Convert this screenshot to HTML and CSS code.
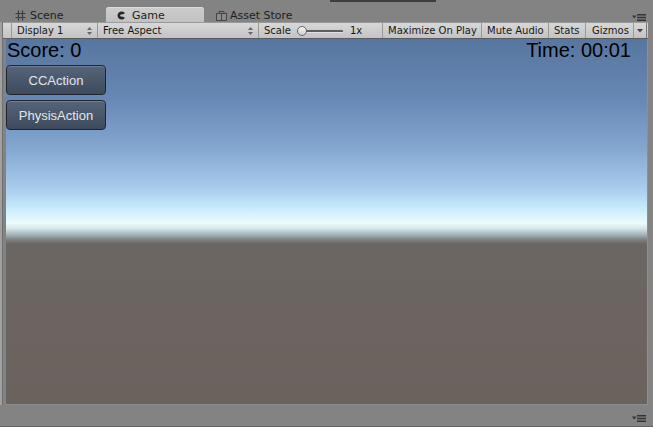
FILE: index.html
```html
<!DOCTYPE html>
<html lang="en">
<head>
  <meta charset="UTF-8">
  <meta name="viewport" content="width=device-width, initial-scale=1.0">
  <link rel="stylesheet" href="styles.css">
  <title>Game</title>
</head>
<body>
  <div class="editor">
    <div class="tabbar">
      <div class="top-mark"></div>
      <div class="tab tab-scene">
        <svg width="11" height="11" viewBox="0 0 11 11"><path d="M3.5 0.5V10.5M7.5 0.5V10.5M0.5 3.5H10.5M0.5 7.5H10.5" stroke="#3c3c3c" stroke-width="1.2" fill="none"/></svg>
        <span>Scene</span>
      </div>
      <div class="tab active">
        <svg width="9" height="9" viewBox="0 0 9 9"><path d="M8 2.2A4.1 4.1 0 1 0 8 6.8L5.2 5.6A1.3 1.3 0 1 1 5.2 3.4Z" fill="#262626"/></svg>
        <span>Game</span>
      </div>
      <div class="tab tab-store">
        <svg width="11" height="11" viewBox="0 0 11 11"><path d="M0.5 3.5H10.5V10.5H0.5Z" fill="#8a8a8a" stroke="#444" stroke-width="1"/><path d="M3 3.5V1.5H8V3.5" stroke="#444" stroke-width="1" fill="none"/><path d="M5.5 3.5V10.5" stroke="#444" stroke-width="1"/></svg>
        <span>Asset Store</span>
      </div>
      <div class="spacer"></div>
      <div class="pane-menu">
        <svg width="14" height="7" viewBox="0 0 14 7"><path d="M0 1.5H4.5L2.25 4.5Z" fill="#333"/><path d="M5 0.75H14M5 3.5H14M5 6.25H14" stroke="#333" stroke-width="1.3"/></svg>
      </div>
    </div>

    <div class="workspace">
      <div class="side-strip"></div>
      <div class="game-panel">
        <div class="toolbar">
          <div class="tool-lead"></div>
          <div class="tool-cell cell-display">
            <span>Display 1</span>
            <svg class="updown" width="5" height="8" viewBox="0 0 5 8"><path d="M0 3H5L2.5 0Z M0 5H5L2.5 8Z" fill="#666"/></svg>
          </div>
          <div class="tool-cell cell-aspect">
            <span>Free Aspect</span>
            <svg class="updown" width="5" height="8" viewBox="0 0 5 8"><path d="M0 3H5L2.5 0Z M0 5H5L2.5 8Z" fill="#666"/></svg>
          </div>
          <div class="tool-cell cell-scale">
            <span>Scale</span>
            <div class="slider">
              <div class="slider-track"></div>
              <div class="slider-knob"></div>
            </div>
            <span class="scale-value">1x</span>
          </div>
          <div class="tool-cell cell-max">Maximize On Play</div>
          <div class="tool-cell cell-mute">Mute Audio</div>
          <div class="tool-cell cell-stats">Stats</div>
          <div class="tool-cell cell-gizmos">Gizmos</div>
          <div class="tool-cell cell-arrow">
            <svg width="6" height="4" viewBox="0 0 6 4"><path d="M0 0H6L3 3.5Z" fill="#444"/></svg>
          </div>
        </div>

        <div class="game-view">
          <div class="hud">
            <span>Score: 0</span>
            <span>Time: 00:01</span>
          </div>
          <button class="gui-button">CCAction</button>
          <button class="gui-button">PhysisAction</button>
        </div>
      </div>
    </div>

    <div class="footer">
      <div class="pane-menu">
        <svg width="14" height="7" viewBox="0 0 14 7"><path d="M0 1.5H4.5L2.25 4.5Z" fill="#333"/><path d="M5 0.75H14M5 3.5H14M5 6.25H14" stroke="#333" stroke-width="1.3"/></svg>
      </div>
    </div>
  </div>
</body>
</html>
```

FILE: styles.css
```css
body {
  margin: 0;
  background: #838383;
  font-family: "DejaVu Sans", sans-serif;
  overflow: hidden;
}

.editor {
  width: 653px;
  height: 427px;
  display: flex;
  flex-direction: column;
}

/* tabs */

.tabbar {
  position: relative;
  height: 22px;
  display: flex;
  align-items: flex-end;
  padding-left: 6px;
  box-sizing: border-box;
}

.top-mark {
  position: absolute;
  left: 330px;
  top: 0;
  width: 106px;
  height: 2px;
  background: #3d3d3d;
}

.tab {
  height: 15px;
  display: flex;
  align-items: center;
  gap: 4px;
  font-size: 11px;
  color: #1e1e1e;
  padding-left: 9px;
  padding-top: 1px;
  box-sizing: border-box;
}

.tab-scene {
  width: 100px;
}

.tab.active {
  width: 98px;
  padding-left: 11px;
  gap: 6px;
  background: linear-gradient(#cdcdcd, #c1c1c1);
  border-radius: 3px 3px 0 0;
  box-shadow: inset 0 1px #dadada;
}

.tab-store {
  width: 100px;
  padding-left: 12px;
  gap: 3px;
}

.spacer {
  flex: 1;
}

.pane-menu {
  width: 14px;
  height: 7px;
  margin-right: 7px;
  margin-bottom: 1px;
  display: flex;
}

/* main area */

.workspace {
  display: flex;
  height: 383px;
}

.side-strip {
  width: 2px;
  height: 383px;
  background: #a1a1a1;
  border-right: 1px solid #707070;
}

.game-panel {
  width: 645px;
  display: flex;
  flex-direction: column;
}

.toolbar {
  height: 17px;
  display: flex;
  background: linear-gradient(#d8d8d8, #c3c3c3);
  border-top: 1px solid #9a9a9a;
  border-bottom: 1px solid #5c5c5c;
  box-sizing: border-box;
  font-size: 10px;
  color: #171717;
}

.tool-lead {
  width: 8px;
}

.tool-cell {
  display: flex;
  align-items: center;
  border-left: 1px solid #999;
  padding-left: 5px;
  box-sizing: border-box;
  white-space: nowrap;
}

.updown {
  margin-left: auto;
  margin-right: 5px;
}

.cell-display {
  width: 86px;
}

.cell-aspect {
  width: 161px;
}

.cell-scale {
  width: 124px;
  padding-left: 5px;
}

.slider {
  position: relative;
  width: 46px;
  height: 10px;
  margin-left: 6px;
}

.slider-track {
  position: absolute;
  left: 2px;
  right: 0;
  top: 4px;
  height: 2px;
  background: #5e5e5e;
  border-bottom: 1px solid #e0e0e0;
  border-radius: 1px;
}

.slider-knob {
  position: absolute;
  left: 0;
  top: 0;
  width: 8px;
  height: 8px;
  border-radius: 50%;
  background: linear-gradient(#f4f4f4, #cfcfcf);
  border: 1px solid #666;
}

.scale-value {
  margin-left: 7px;
}

.cell-max {
  width: 99px;
}

.cell-mute {
  width: 67px;
}

.cell-stats {
  width: 37px;
}

.cell-gizmos {
  width: 48px;
  padding-left: 6px;
}

.cell-arrow {
  width: 14px;
  padding-left: 3px;
  border-right: 1px solid #777;
}

/* game view */

.game-view {
  margin-left: 3px;
  width: 642px;
  height: 366px;
  box-sizing: border-box;
  border-bottom: 1px solid #8f8f8f;
  border-right: 1px solid #8f8f8f;
  background: linear-gradient(
    #57769f 0px,
    #6788b4 60px,
    #84a7d0 110px,
    #a9cdec 150px,
    #c8ecfc 170px,
    #ecfcff 184px,
    #d2e4e8 190px,
    #a0b0b4 196px,
    #7c7e7e 201px,
    #6c6662 205px,
    #6a625d 366px
  );
  display: flex;
  flex-direction: column;
  align-items: flex-start;
  font-family: "Liberation Sans", Arial, sans-serif;
}

.hud {
  width: 100%;
  display: flex;
  justify-content: space-between;
  box-sizing: border-box;
  padding: 0 16px 0 1px;
  font-size: 20px;
  line-height: 22px;
  color: #000;
}

.gui-button {
  width: 100px;
  height: 30px;
  margin-top: 4px;
  margin-bottom: 1px;
  border: 1px solid #1f252e;
  border-radius: 4px;
  background: linear-gradient(#56657a, #3e4a5c);
  box-shadow: inset 0 1px rgba(255, 255, 255, 0.18);
  color: #e2e6ec;
  font-family: "Liberation Sans", Arial, sans-serif;
  font-size: 13px;
  padding: 0;
}

.footer {
  height: 22px;
  display: flex;
  justify-content: flex-end;
  align-items: flex-end;
  padding-bottom: 3px;
  box-sizing: border-box;
  border-bottom: 1px solid #626262;
}
```
